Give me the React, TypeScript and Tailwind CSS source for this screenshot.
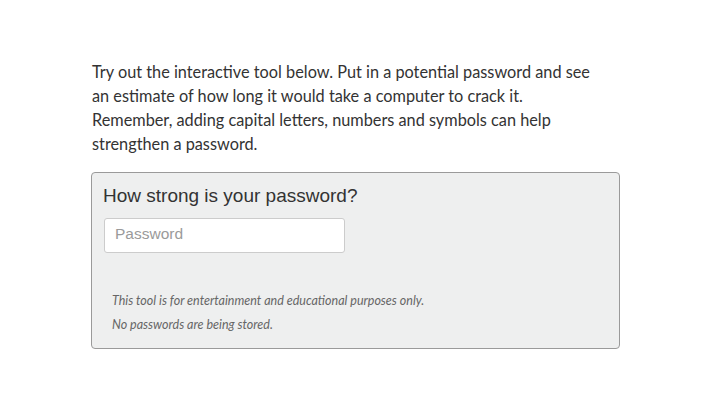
import React from 'react';

const App: React.FC = () => {
  return (
    <div className="w-[711px] h-[400px] bg-white overflow-hidden">
      <div className="pl-[92px] pr-[60px] pt-[60px]">
        <p className="text-[16.3px] leading-[24px] text-[#333] font-['Lato',sans-serif] whitespace-nowrap">
          Try out the interactive tool below. Put in a potential password and see
          <br />
          an estimate of how long it would take a computer to crack it.
          <br />
          Remember, adding capital letters, numbers and symbols can help
          <br />
          strengthen a password.
        </p>

        <div className="mt-[16px] -ml-[1px] w-[529px] h-[177px] rounded-[4px] border border-[#9a9a9a] bg-[#eeefef] px-[11px] pt-[11px]">
          <h3 className="text-[19px] leading-[24px] text-[#333] font-['Liberation_Sans',Arial,sans-serif]">
            How strong is your password?
          </h3>
          <input
            type="password"
            placeholder="Password"
            className="mt-[10px] ml-[1px] block w-[241px] h-[35px] rounded-[3px] border border-[#ccc] bg-white px-[10px] pb-[3px] text-[15.5px] text-[#333] placeholder:text-[#9a9a9a] font-['Liberation_Sans',Arial,sans-serif] outline-none"
          />
          <div className="mt-[36px] pl-[9px] text-[12.5px] italic text-[#666] font-['Lato',sans-serif] leading-[24px]">
            <p>This tool is for entertainment and educational purposes only.</p>
            <p>No passwords are being stored.</p>
          </div>
        </div>
      </div>
    </div>
  );
};

export default App;
